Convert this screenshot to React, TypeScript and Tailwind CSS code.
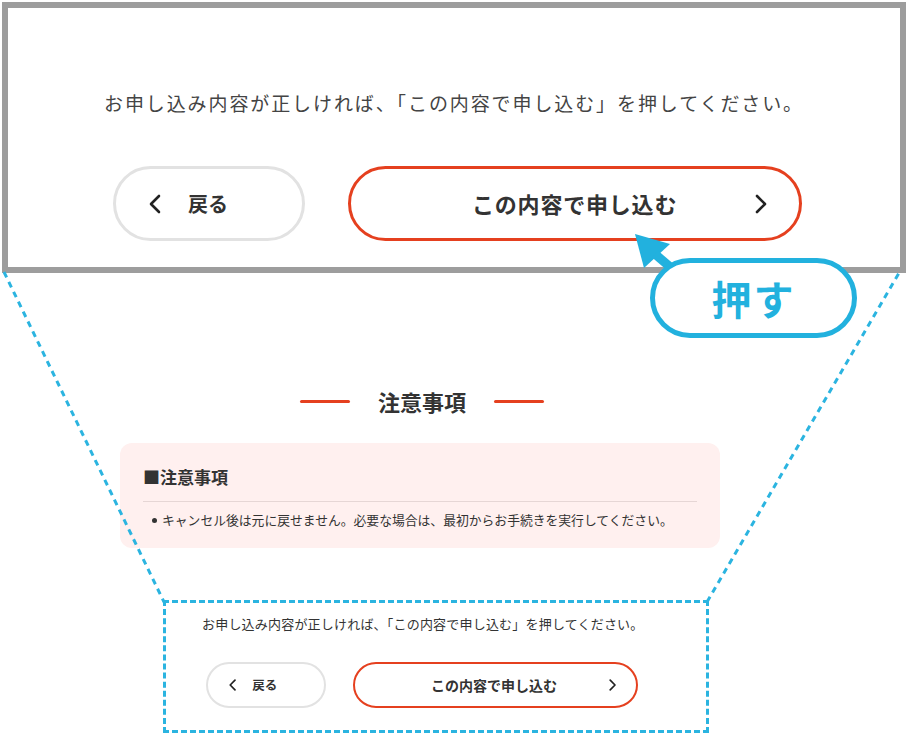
import type { ReactNode } from 'react';

const FONT = '"Noto Sans CJK JP", "Noto Sans", sans-serif';

function Chevron({ dir, size, stroke }: { dir: 'left' | 'right'; size: number; stroke: number }) {
  return (
    <svg width={size * 0.6} height={size} viewBox="0 0 12 20" fill="none" className="shrink-0">
      <polyline
        points={dir === 'left' ? '10,2 2,10 10,18' : '2,2 10,10 2,18'}
        stroke="#222"
        strokeWidth={stroke}
        strokeLinecap="round"
        strokeLinejoin="round"
      />
    </svg>
  );
}

function Pill({ children, className }: { children: ReactNode; className: string }) {
  return <div className={`flex items-center rounded-full bg-white ${className}`}>{children}</div>;
}

export default function App() {
  return (
    <div
      className="relative h-[748px] w-[912px] overflow-hidden bg-white text-[#333]"
      style={{ fontFamily: FONT }}
    >
      {/* zoomed view */}
      <div className="ml-[2px] mt-[2px] flex h-[271px] w-[904px] flex-col items-center border-[6px] border-[#9d9d9d] bg-white">
        <p className="mt-[81px] text-[19px] leading-[28px] tracking-[1.9px] text-[#444]">
          お申し込み内容が正しければ、「この内容で申し込む」を押してください。
        </p>
        <div className="mt-[49px] flex w-full gap-[43px] pl-[105px]">
          <Pill className="h-[75px] w-[192px] border-[3px] border-[#e2e2e2] pl-[33px]">
            <Chevron dir="left" size={20} stroke={2.6} />
            <span className="ml-[27px] text-[20px] font-bold text-[#333]">戻る</span>
          </Pill>
          <Pill className="h-[75px] w-[454px] border-[3px] border-[#e5401f]">
            <span className="ml-[121px] text-[22px] font-bold tracking-[0.8px] text-[#333]">
              この内容で申し込む
            </span>
            <span className="ml-auto mr-[32px]">
              <Chevron dir="right" size={20} stroke={2.6} />
            </span>
          </Pill>
        </div>
      </div>

      {/* notes heading */}
      <div className="mt-[113px] flex items-center justify-center gap-[28px] pr-[68px]">
        <span className="h-[3px] w-[50px] rounded-full bg-[#e5401f]" />
        <h2 className="text-[22px] font-bold leading-[30px] text-[#333]">注意事項</h2>
        <span className="h-[3px] w-[50px] rounded-full bg-[#e5401f]" />
      </div>

      <div className="ml-[120px] mt-[27px] h-[105px] w-[600px] rounded-[12px] bg-[#fff0ef] px-[23px] pt-[22px]">
        <h3 className="text-[17px] font-bold leading-[24px] text-[#333]">■注意事項</h3>
        <div className="mt-[12px] h-px bg-[#e6d6d5]" />
        <p className="mt-[9px] flex items-center pl-[9px] text-[12.8px] leading-[18px] text-[#333]">
          <span className="mr-[5px] inline-block h-[5px] w-[5px] rounded-full bg-[#333]" />
          キャンセル後は元に戻せません。必要な場合は、最初からお手続きを実行してください。
        </p>
      </div>

      {/* actual view */}
      <div className="ml-[163px] mt-[52px] h-[133px] w-[546px] border-[3px] border-dashed border-[#2bb4e0] pl-[36px] pt-[11px]">
        <p className="text-[13px] leading-[20px] tracking-[0.2px] text-[#333]">
          お申し込み内容が正しければ、「この内容で申し込む」を押してください。
        </p>
        <div className="mt-[28px] flex gap-[27px] pl-[4px]">
          <Pill className="h-[46px] w-[120px] border-2 border-[#e2e2e2] pl-[21px]">
            <Chevron dir="left" size={12} stroke={2.8} />
            <span className="ml-[16px] text-[12.5px] font-bold text-[#333]">戻る</span>
          </Pill>
          <Pill className="h-[46px] w-[285px] border-2 border-[#e5401f]">
            <span className="ml-[76px] text-[14px] font-bold text-[#333]">この内容で申し込む</span>
            <span className="ml-auto mr-[20px]">
              <Chevron dir="right" size={12} stroke={2.8} />
            </span>
          </Pill>
        </div>
      </div>

      {/* connector lines */}
      <svg className="pointer-events-none absolute left-0 top-0" width={912} height={748}>
        <line x1={4} y1={272} x2={164} y2={602} stroke="#2bb4e0" strokeWidth={3} strokeDasharray="6 5" />
        <line x1={707} y1={602} x2={899} y2={273} stroke="#2bb4e0" strokeWidth={3} strokeDasharray="6 5" />
        <polygon points="635,234 670,244 644,268" fill="#22b1de" />
        <line x1={655} y1={254} x2={676} y2={272} stroke="#22b1de" strokeWidth={9} />
      </svg>

      {/* callout */}
      <div className="absolute left-[650px] top-[258px] flex h-[80px] w-[207px] items-center justify-center rounded-full border-[5px] border-[#22b1de] bg-white">
        <span className="text-[40px] font-bold leading-none tracking-[2px] text-[#22b1de]">押す</span>
      </div>
    </div>
  );
}
